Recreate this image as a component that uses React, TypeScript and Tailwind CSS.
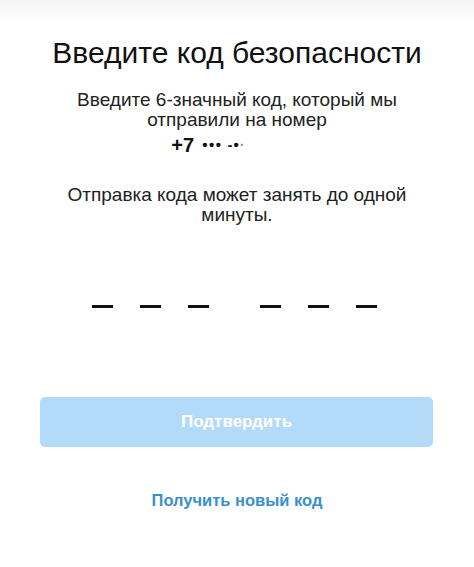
export default function App() {
  return (
    <div
      className="w-[474px] h-[567px] bg-white overflow-hidden flex flex-col items-center relative"
      style={{ fontFamily: '"Liberation Sans", Arial, sans-serif' }}
    >
      <div className="absolute top-0 left-0 right-0 h-[22px] bg-gradient-to-b from-[#f4f4f4] to-white" />
      <h1 className="mt-[35px] text-[30px] leading-[36px] text-[#111] font-normal relative">
        Введите код безопасности
      </h1>
      <p className="mt-[19px] text-[19px] leading-[20px] text-[#222] text-center">
        Введите 6-значный код, который мы
        <br />
        отправили на номер
      </p>
      <p className="mt-[5px] text-[20px] leading-[20px] font-bold text-[#111] ml-[-58px] flex items-center">
        <span>+7</span>
        <span className="ml-[8px] text-[15px] tracking-[1.5px]">•••</span>
        <span className="ml-[5px] text-[15px] tracking-[1px]">-•</span>
        <span className="text-[15px] text-[#999]">·</span>
      </p>
      <p className="mt-[30px] text-[19px] leading-[20px] text-[#222] text-center">
        Отправка кода может занять до одной
        <br />
        минуты.
      </p>
      <div className="mt-[80px] flex items-center ml-[-6px]">
        <div className="flex gap-[27px]">
          <div className="w-[21px] h-[3px] bg-[#111]" />
          <div className="w-[21px] h-[3px] bg-[#111]" />
          <div className="w-[21px] h-[3px] bg-[#111]" />
        </div>
        <div className="flex gap-[27px] ml-[51px]">
          <div className="w-[21px] h-[3px] bg-[#111]" />
          <div className="w-[21px] h-[3px] bg-[#111]" />
          <div className="w-[21px] h-[3px] bg-[#111]" />
        </div>
      </div>
      <button className="mt-[89px] w-[393px] h-[50px] rounded-[5px] bg-[#b3dbf9] text-white font-bold text-[17px] ml-[-1px]">
        Подтвердить
      </button>
      <div className="mt-[43px] text-[16.5px] leading-[20px] font-bold text-[#3a8fcf]">
        Получить новый код
      </div>
    </div>
  );
}
